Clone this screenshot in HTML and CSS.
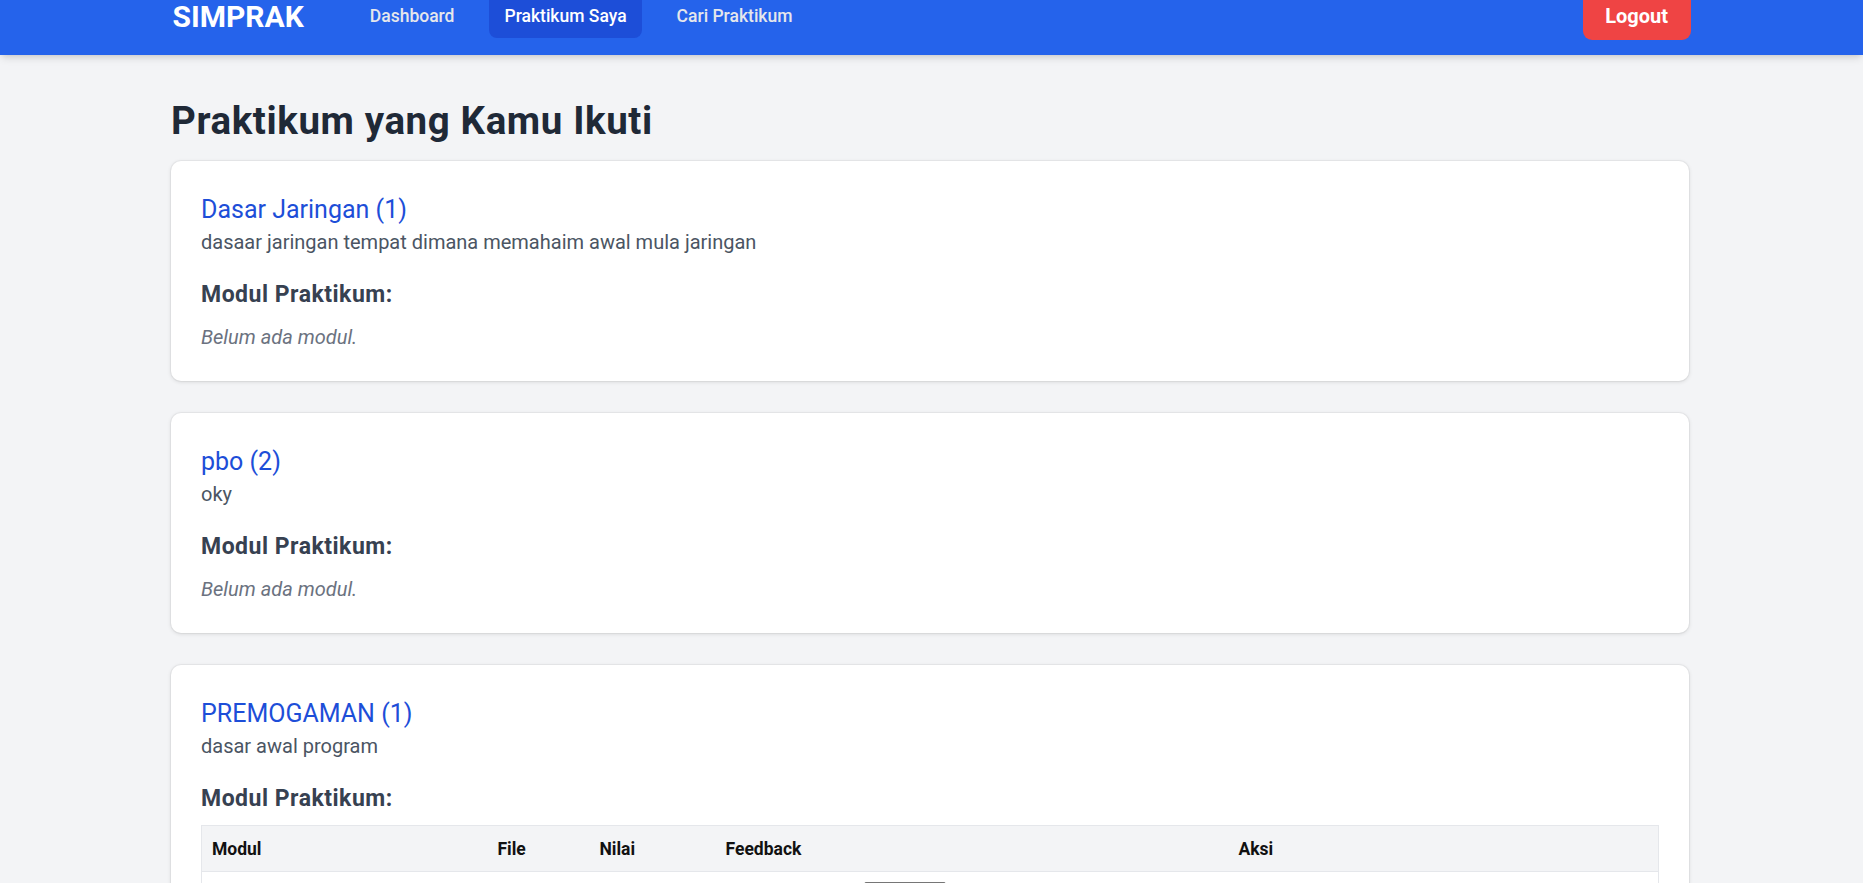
FILE: index.html
```html
<!DOCTYPE html>
<html lang="id">
<head>
<meta charset="utf-8">
<title>SIMPRAK - Praktikum Saya</title>
<link rel="stylesheet" href="styles.css">
</head>
<body>
<nav class="navbar">
  <div class="nav-inner">
    <div class="nav-left">
      <span class="brand">SIMPRAK</span>
      <div class="nav-links">
        <a class="nav-link" href="#">Dashboard</a>
        <a class="nav-link active" href="#">Praktikum Saya</a>
        <a class="nav-link" href="#">Cari Praktikum</a>
      </div>
    </div>
    <a class="logout" href="#">Logout</a>
  </div>
</nav>

<main class="main">
  <h1 class="page-title">Praktikum yang Kamu Ikuti</h1>

  <section class="card">
    <h2 class="card-title">Dasar Jaringan (1)</h2>
    <p class="card-desc">dasaar jaringan tempat dimana memahaim awal mula jaringan</p>
    <h3 class="card-sub">Modul Praktikum:</h3>
    <p class="empty">Belum ada modul.</p>
  </section>

  <section class="card">
    <h2 class="card-title">pbo (2)</h2>
    <p class="card-desc">oky</p>
    <h3 class="card-sub">Modul Praktikum:</h3>
    <p class="empty">Belum ada modul.</p>
  </section>

  <section class="card">
    <h2 class="card-title">PREMOGAMAN (1)</h2>
    <p class="card-desc">dasar awal program</p>
    <h3 class="card-sub">Modul Praktikum:</h3>
    <table class="modul-table">
      <thead>
        <tr>
          <th class="col-modul">Modul</th>
          <th class="col-file">File</th>
          <th class="col-nilai">Nilai</th>
          <th class="col-feedback">Feedback</th>
          <th class="col-aksi">Aksi</th>
        </tr>
      </thead>
      <tbody>
        <tr>
          <td></td>
          <td></td>
          <td></td>
          <td></td>
          <td><span class="file-box"></span></td>
        </tr>
      </tbody>
    </table>
  </section>
</main>
</body>
</html>
```

FILE: styles.css
```css
* {
  box-sizing: border-box;
}

html, body {
  margin: 0;
  padding: 0;
}

body {
  background: #f3f4f6;
  font-family: Roboto, "Liberation Sans", Arial, sans-serif;
  color: #1f2937;
  padding-right: 3px;
}

.navbar {
  height: 55px;
  background: #2563eb;
  overflow: hidden;
  box-shadow: 0 5px 8px -2px rgba(0, 0, 0, 0.12), 0 2px 5px -2px rgba(0, 0, 0, 0.1);
  position: relative;
  z-index: 1;
  margin-right: -3px;
}

.nav-inner {
  width: 1518px;
  margin: -25px auto 0;
  height: 80px;
  display: flex;
  align-items: center;
  justify-content: space-between;
  position: relative;
}

.nav-left {
  display: flex;
  align-items: center;
}

.brand {
  font-size: 30px;
  line-height: 36px;
  padding-top: 4px;
  font-weight: 700;
  color: #ffffff;
}

.nav-links {
  display: flex;
  gap: 20px;
  margin-left: 51px;
}

.nav-link {
  display: block;
  padding: 12.5px 15px 10px;
  line-height: 23px;
  font-size: 17.5px;
  font-weight: 500;
  color: #e5e7eb;
  text-decoration: none;
  border-radius: 8px;
}

.nav-link.active {
  background: #1d4ed8;
  color: #ffffff;
}

.logout {
  display: block;
  background: #ef4444;
  color: #ffffff;
  font-weight: 700;
  font-size: 20px;
  line-height: 27px;
  padding: 13px 22.5px 10px;
  border-radius: 9px;
  text-decoration: none;
}

.main {
  width: 1518px;
  margin: 0 auto;
  padding-top: 41px;
}

.page-title {
  margin: 0 0 20px;
  padding-top: 5px;
  font-size: 38.5px;
  line-height: 40px;
  letter-spacing: 0.6px;
  font-weight: 700;
  color: #1f2937;
}

.card {
  background: #ffffff;
  border-radius: 10px;
  padding: 30px;
  margin-bottom: 32px;
  box-shadow: 0 0 0 1px rgba(0, 0, 0, 0.035), 0 1px 4px rgba(0, 0, 0, 0.12);
}

.card-title {
  margin: 0;
  padding-top: 3.4px;
  font-size: 25px;
  line-height: 31.6px;
  font-weight: 400;
  color: #1d4ed8;
}

.card-desc {
  margin: 0;
  padding-top: 2.7px;
  font-size: 20px;
  line-height: 27.3px;
  color: #4b5563;
}

.card-sub {
  margin: 20px 0 10px;
  padding-top: 3px;
  font-size: 23px;
  line-height: 32px;
  letter-spacing: 0.5px;
  font-weight: 700;
  color: #374151;
}

.empty {
  margin: 0;
  padding-top: 2.7px;
  font-size: 20px;
  line-height: 27.3px;
  font-style: italic;
  color: #6b7280;
}

.modul-table {
  width: 100%;
  border-collapse: collapse;
  border: 1px solid #e5e7eb;
  font-size: 17.5px;
  table-layout: fixed;
}

.modul-table th {
  background: #f3f4f6;
  padding: 12.4px 10px 10px;
  line-height: 22.6px;
  text-align: left;
  font-weight: 700;
  color: #111111;
  border: 1px solid #e5e7eb;
  border-left: none;
  border-right: none;
}

.modul-table td {
  padding: 10px;
  line-height: 25px;
  vertical-align: top;
}

.modul-table .col-modul { width: 286px; }
.modul-table .col-file { width: 102px; }
.modul-table .col-nilai { width: 126px; }
.modul-table .col-feedback { width: 138px; }
.modul-table .col-aksi { text-align: center; }

.file-box {
  display: block;
  width: 82px;
  height: 32px;
  border: 1px solid #767676;
  border-radius: 2px;
  background: #efefef;
}
```
